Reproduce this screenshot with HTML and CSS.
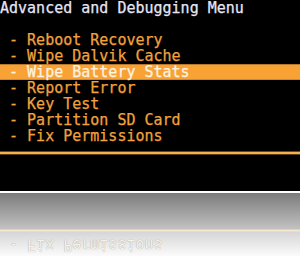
FILE: index.html
```html
<!DOCTYPE html>
<html>
<head>
    <meta charset="UTF-8">
    <title>Advanced and Debugging Menu</title>
    <link rel="stylesheet" href="styles.css">
</head>
<body>
    <div class="screen">
        <div class="title">Advanced and Debugging Menu</div>
        <ul class="menu">
            <li class="item"> - Reboot Recovery</li>
            <li class="item"> - Wipe Dalvik Cache</li>
            <li class="item active"> - Wipe Battery Stats</li>
            <li class="item"> - Report Error</li>
            <li class="item"> - Key Test</li>
            <li class="item"> - Partition SD Card</li>
            <li class="item"> - Fix Permissions</li>
        </ul>
        <div class="rule"></div>
    </div>

    <!-- mirrored reflection under the screen -->
    <div class="reflection">
        <div class="fade-dark"></div>
        <div class="rule-ghost"></div>
        <div class="fade-light">
            <div class="ghost-text"> - Fix Permissions</div>
        </div>
    </div>
</body>
</html>
```

FILE: styles.css
```css
body {
    margin: 0;
    padding: 0;
    width: 300px;
    height: 256px;
    overflow: hidden;
    background-color: #ffffff;
    font-family: "DejaVu Sans Mono", "Liberation Mono", monospace;
    font-size: 15px;
    line-height: 16px;
}

.screen {
    background-color: #000000;
    height: 191px;
    overflow: hidden;
}

.title {
    height: 16px;
    color: #e6e6f4;
    white-space: pre;
    -webkit-text-stroke: 0.25px #e6e6f4;
}

.menu {
    list-style: none;
    margin: 16px 0 0;
    padding: 0;
}

.item {
    height: 16px;
    color: #f2a23c;
    white-space: pre;
    -webkit-text-stroke: 0.25px #f2a23c;
}

.item.active {
    background-color: #f8a236;
    color: #fff3e2;
    -webkit-text-stroke: 0.25px #fff3e2;
    box-shadow: inset 0 1px #b8782a, inset 0 -1px #c88a34;
}

.rule {
    margin-top: 7px;
    height: 2px;
    background-color: #f2b250;
    border-top: 1px solid #6a4618;
    border-bottom: 1px solid #5a3a12;
}

.reflection {
    border-top: 2px solid #ffffff;
}

.fade-dark {
    height: 36px;
    background: linear-gradient(to bottom, #7b7b7b, #c2c2c2);
}

.rule-ghost {
    height: 1px;
    background-color: #f6e6cc;
    border-top: 1px solid #dcd2c2;
    border-bottom: 1px solid #e6ddd0;
}

.fade-light {
    height: 24px;
    padding-top: 5px;
    box-sizing: border-box;
    background: linear-gradient(to bottom, #d6d6d6, #fbfbfb);
    overflow: hidden;
}

.ghost-text {
    height: 16px;
    white-space: pre;
    color: #f7f2ea;
    text-shadow: 0 0 1px rgba(0, 0, 0, 0.4);
    transform: scaleY(-1);
}
```
